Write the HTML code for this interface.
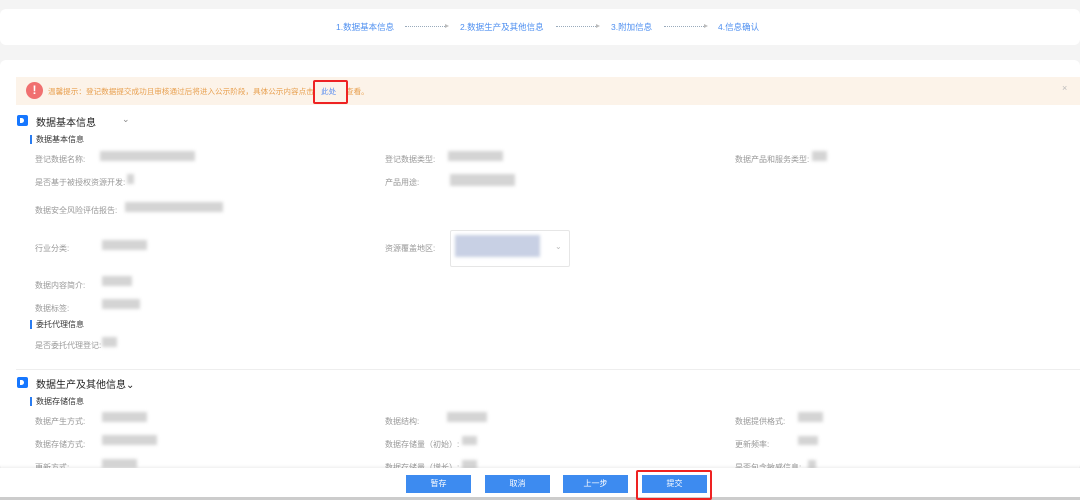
<!DOCTYPE html><html><head><meta charset="utf-8"><style>
body{margin:0;width:1080px;height:500px;overflow:hidden;background:#f4f4f4;font-family:"Liberation Sans","Noto Sans CJK SC",sans-serif;position:relative}
.a{position:absolute}
.st{position:absolute;top:21px;font-size:8.5px;color:#4e8ff0;white-space:nowrap}
.ar{position:absolute;top:26px;height:0;border-top:1px dotted #9ab;width:40px}
.ar:after{content:"";position:absolute;right:-4px;top:-3px;border-left:4px solid #bbb;border-top:2.5px solid transparent;border-bottom:2.5px solid transparent}
.lbl{position:absolute;font-size:8px;color:#999;white-space:nowrap}
.bl{position:absolute;background:#d4d4d4;filter:blur(1.5px)}
.btn{position:absolute;top:475px;width:65px;height:18px;background:#3d8bf0;color:#fff;font-size:8px;text-align:center;line-height:18px}
.sub{position:absolute;font-size:8px;color:#333;border-left:2px solid #2a7cf0;padding-left:4px;line-height:9px}
.ico{position:absolute;width:11px;height:11px;background:#1677ff;border-radius:2px}
.ico:after{content:"";position:absolute;left:3px;top:3px;width:4px;height:5px;background:#fff;border-radius:0 3px 3px 0}
</style></head><body>
<div class="a" style="left:0;top:9px;width:1080px;height:36px;background:#fff;border-radius:6px"></div>
<div class="st" style="left:336px">1.数据基本信息</div><div class="ar" style="left:405px"></div>
<div class="st" style="left:460px">2.数据生产及其他信息</div><div class="ar" style="left:556px"></div>
<div class="st" style="left:611px">3.附加信息</div><div class="ar" style="left:664px"></div>
<div class="st" style="left:718px">4.信息确认</div>
<div class="a" style="left:0;top:60px;width:1080px;height:410px;background:#fff;border-radius:6px"></div>
<div class="a" style="left:16px;top:77px;width:1064px;height:28px;background:#fcf3e9"></div>
<div class="a" style="left:26px;top:82px;width:17px;height:17px;border-radius:50%;background:#f07070;color:#fff;font-size:12px;font-weight:bold;text-align:center;line-height:17px">!</div>
<div class="a" style="left:48px;top:86px;font-size:7.6px;color:#e8a050;white-space:nowrap">温馨提示：登记数据提交成功且审核通过后将进入公示阶段，具体公示内容点击</div>
<div class="a" style="left:321px;top:86px;font-size:7.6px;color:#5b8ef0">此处</div>
<div class="a" style="left:346px;top:86px;font-size:7.6px;color:#e8a050">查看。</div>
<div class="a" style="left:313px;top:80px;width:31px;height:20px;border:2px solid #e22;border-radius:2px"></div>
<div class="a" style="left:1062px;top:83px;font-size:9px;color:#bbb">×</div>
<div class="ico" style="left:17px;top:115px"></div>
<div class="a" style="left:36px;top:114px;font-size:10px;color:#222">数据基本信息</div>
<div class="a" style="left:122px;top:114px;font-size:9px;color:#888">⌄</div>
<div class="sub" style="left:30px;top:135px">数据基本信息</div>
<div class="lbl" style="left:35px;top:154px">登记数据名称:</div><div class="bl" style="left:100px;top:151px;width:95px;height:10px"></div>
<div class="lbl" style="left:385px;top:154px">登记数据类型:</div><div class="bl" style="left:448px;top:151px;width:55px;height:10px"></div>
<div class="lbl" style="left:735px;top:154px">数据产品和服务类型:</div><div class="bl" style="left:812px;top:151px;width:15px;height:10px"></div>
<div class="lbl" style="left:35px;top:177px">是否基于被授权资源开发:</div><div class="bl" style="left:127px;top:174px;width:7px;height:10px"></div>
<div class="lbl" style="left:385px;top:177px">产品用途:</div><div class="bl" style="left:450px;top:174px;width:65px;height:12px"></div>
<div class="lbl" style="left:35px;top:205px">数据安全风险评估报告:</div><div class="bl" style="left:125px;top:202px;width:98px;height:10px"></div>
<div class="lbl" style="left:35px;top:243px">行业分类:</div><div class="bl" style="left:102px;top:240px;width:45px;height:10px"></div>
<div class="lbl" style="left:385px;top:243px">资源覆盖地区:</div>
<div class="a" style="left:450px;top:230px;width:118px;height:35px;border:1px solid #e6e6e6;border-radius:2px"></div>
<div class="bl" style="left:455px;top:235px;width:85px;height:22px;background:#c8d0e4"></div>
<div class="a" style="left:555px;top:242px;font-size:8px;color:#bbb">⌄</div>
<div class="lbl" style="left:35px;top:280px">数据内容简介:</div><div class="bl" style="left:102px;top:276px;width:30px;height:10px"></div>
<div class="lbl" style="left:35px;top:303px">数据标签:</div><div class="bl" style="left:102px;top:299px;width:38px;height:10px"></div>
<div class="sub" style="left:30px;top:320px">委托代理信息</div>
<div class="lbl" style="left:35px;top:340px">是否委托代理登记:</div><div class="bl" style="left:102px;top:337px;width:15px;height:10px"></div>
<div class="a" style="left:16px;top:369px;width:1064px;height:1px;background:#eee"></div>
<div class="ico" style="left:17px;top:377px"></div>
<div class="a" style="left:36px;top:376px;font-size:10px;color:#222">数据生产及其他信息⌄</div>
<div class="sub" style="left:30px;top:397px">数据存储信息</div>
<div class="lbl" style="left:35px;top:416px">数据产生方式:</div><div class="bl" style="left:102px;top:412px;width:45px;height:10px"></div>
<div class="lbl" style="left:385px;top:416px">数据结构:</div><div class="bl" style="left:447px;top:412px;width:40px;height:10px"></div>
<div class="lbl" style="left:735px;top:416px">数据提供格式:</div><div class="bl" style="left:798px;top:412px;width:25px;height:10px"></div>
<div class="lbl" style="left:35px;top:439px">数据存储方式:</div><div class="bl" style="left:102px;top:435px;width:55px;height:10px"></div>
<div class="lbl" style="left:385px;top:439px">数据存储量（初始）:</div><div class="bl" style="left:462px;top:436px;width:15px;height:9px"></div>
<div class="lbl" style="left:735px;top:439px">更新频率:</div><div class="bl" style="left:798px;top:436px;width:20px;height:9px"></div>
<div class="lbl" style="left:35px;top:462px">更新方式:</div><div class="bl" style="left:102px;top:459px;width:35px;height:9px"></div>
<div class="lbl" style="left:385px;top:462px">数据存储量（增长）:</div><div class="bl" style="left:462px;top:460px;width:15px;height:9px"></div>
<div class="lbl" style="left:735px;top:462px">是否包含敏感信息:</div><div class="bl" style="left:808px;top:460px;width:8px;height:9px"></div>
<div class="a" style="left:0;top:468px;width:1080px;height:32px;background:#fff;box-shadow:0 -1px 3px rgba(0,0,0,.08)"></div>
<div class="a" style="left:0;top:497px;width:1080px;height:3px;background:#ccc"></div>
<div class="btn" style="left:406px">暂存</div>
<div class="btn" style="left:485px">取消</div>
<div class="btn" style="left:563px">上一步</div>
<div class="btn" style="left:642px">提交</div>
<div class="a" style="left:636px;top:470px;width:72px;height:26px;border:2px solid #e22;border-radius:2px"></div>
</body></html>
